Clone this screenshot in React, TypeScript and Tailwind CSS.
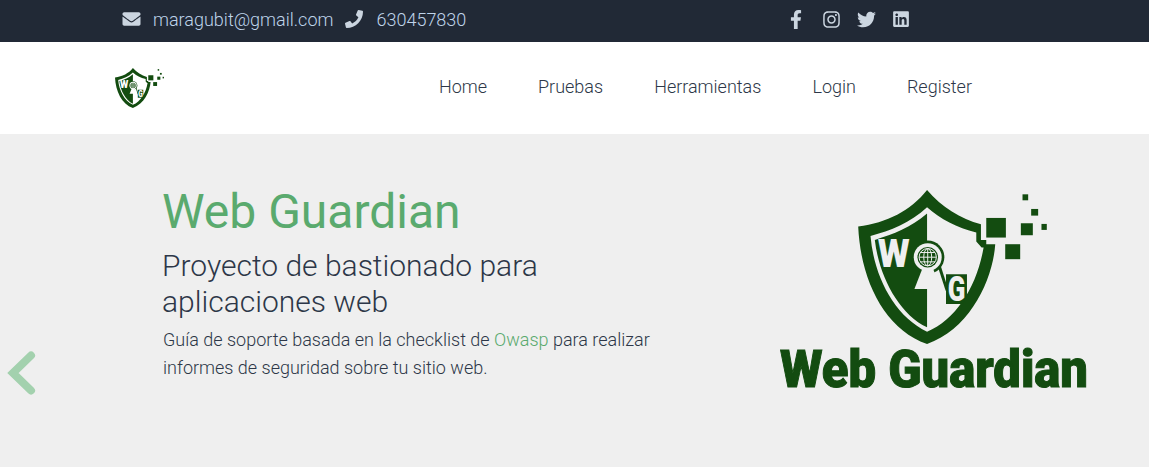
import { FaEnvelope, FaPhone, FaFacebookF, FaInstagram, FaTwitter, FaLinkedin } from "react-icons/fa";

const NAV_LINKS = ["Home", "Pruebas", "Herramientas", "Login", "Register"];
const GREEN = "#134c10";

// shield drawn in a 567x463 box
const Shield = ({ bg, className }: { bg: string; className: string }) => (
  <svg viewBox="263 32 567 463" className={className}>
    <path
      d="M470 32 C515 85 570 118 632 135 L632 182 L648 182 L648 195 L675 195 C668 300 600 450 470 495 C340 450 270 300 263 142 C350 130 420 95 470 32 Z"
      fill={GREEN}
    />
    <path
      d="M470 84 C420 130 360 155 300 170 C310 290 370 410 470 458 C560 420 620 320 640 205 L634 205 L618 187 L618 160 C560 145 510 120 470 84 Z"
      fill={bg}
    />
    <path d="M470 103 C420 145 370 165 313 182 C325 290 385 405 470 445 Z" fill={GREEN} />
    {/* W */}
    <text x="322" y="265" fontFamily="Roboto, sans-serif" fontWeight="900" fontSize="118" textLength="96" lengthAdjust="spacingAndGlyphs" fill={bg}>
      W
    </text>
    {/* keyhole */}
    <circle cx="472" cy="234" r="50" fill={GREEN} />
    <circle cx="472" cy="234" r="42" fill={bg} />
    <circle cx="472" cy="234" r="31" fill={GREEN} />
    <g fill="none" stroke={bg} strokeWidth="3">
      <circle cx="472" cy="234" r="26" />
      <ellipse cx="472" cy="234" rx="12" ry="26" />
      <path d="M472 208 V260 M446 234 H498 M450 220 H494 M450 248 H494" />
    </g>
    <path d="M456 268 L432 330 L510 330 L488 268 Z" fill={bg} />
    <path d="M503 264 L511 260 L536 338 L526 335 Z" fill={GREEN} />
    <path d="M527 285 H590 V350 L578 375 H527 Z" fill={GREEN} />
    <text x="532" y="365" fontFamily="Roboto, sans-serif" fontWeight="900" fontSize="104" textLength="53" lengthAdjust="spacingAndGlyphs" fill={bg}>
      G
    </text>
    {/* pixels */}
    <g fill={GREEN}>
      <rect x="648" y="116" width="59" height="59" />
      <rect x="705" y="195" width="45" height="45" />
      <rect x="752" y="132" width="36" height="36" />
      <rect x="783" y="89" width="21" height="20" />
      <rect x="757" y="45" width="17" height="18" />
      <rect x="814" y="134" width="16" height="18" />
    </g>
  </svg>
);

export default function App() {
  return (
    <div className="min-h-[467px] bg-white font-['Roboto',sans-serif]">
      {/* Top bar */}
      <div className="flex h-[42px] items-center bg-[#212936] pb-1 pl-[122px] text-[18px] font-light text-[#bfd4ea]">
        <FaEnvelope className="h-[18px] w-[19px] text-[#cbd5e0]" />
        <span className="ml-[12px]">maragubit@gmail.com</span>
        <FaPhone className="ml-[12px] h-[18px] w-[18px] text-[#cbd5e0]" />
        <span className="ml-[13px]">630457830</span>
        <div className="ml-[324px] flex items-center gap-[17px] text-[#cbd5e0]">
          <FaFacebookF className="mr-[4px] h-[19px] w-[12px]" />
          <FaInstagram className="h-[19px] w-[17px]" />
          <FaTwitter className="h-[19px] w-[19px]" />
          <FaLinkedin className="h-[18px] w-[16px]" />
        </div>
      </div>

      {/* Navbar */}
      <nav className="flex h-[92px] items-center justify-between pb-1 pl-[115px] pr-[177px]">
        <Shield bg="#ffffff" className="mt-1 h-[40px] w-[49px]" />
        <ul className="flex list-none gap-[51px] text-[18px] font-light text-[#2d3748]">
          {NAV_LINKS.map((link) => (
            <li key={link}>{link}</li>
          ))}
        </ul>
      </nav>

      {/* Hero */}
      <section className="relative flex h-[333px] items-start bg-[#efefef] pl-[163px]">
        <div className="w-[510px] pt-[48px]">
          <h1 className="-ml-px text-[48px] leading-[60px] font-normal text-[#5aaa6e]">Web Guardian</h1>
          <h2 className="-ml-px mt-[6px] text-[30px] leading-[36px] font-light text-[#2d3748]">
            Proyecto de bastionado para aplicaciones web
          </h2>
          <p className="mt-[6px] text-[18px] leading-[28px] font-light text-[#2d3748]">
            Guía de soporte basada en la checklist de <span className="text-[#5aaa6e]">Owasp</span> para realizar
            informes de seguridad sobre tu sitio web.
          </p>
        </div>
        <div className="ml-[107px] flex w-[308px] flex-col items-center pt-[56px]">
          <Shield bg="#efefef" className="ml-[36px] h-[154px] w-[189px]" />
          <svg viewBox="0 0 308 60" className="h-[60px] w-[308px]">
            <text x="0" y="43" fontFamily="Roboto, sans-serif" fontWeight="900" fontSize="51" textLength="308" lengthAdjust="spacingAndGlyphs" fill={GREEN} stroke={GREEN} strokeWidth="1">
              Web Guardian
            </text>
          </svg>
        </div>

        {/* carousel arrow */}
        <button className="absolute left-0 top-[216px] text-[#a3d1ae]">
          <svg viewBox="0 0 40 48" className="h-[48px] w-[40px]">
            <path d="M31 5.5 L13 23 L31 40.5" fill="none" stroke="currentColor" strokeWidth="8" strokeLinecap="round" strokeLinejoin="miter" />
          </svg>
        </button>
      </section>
    </div>
  );
}
